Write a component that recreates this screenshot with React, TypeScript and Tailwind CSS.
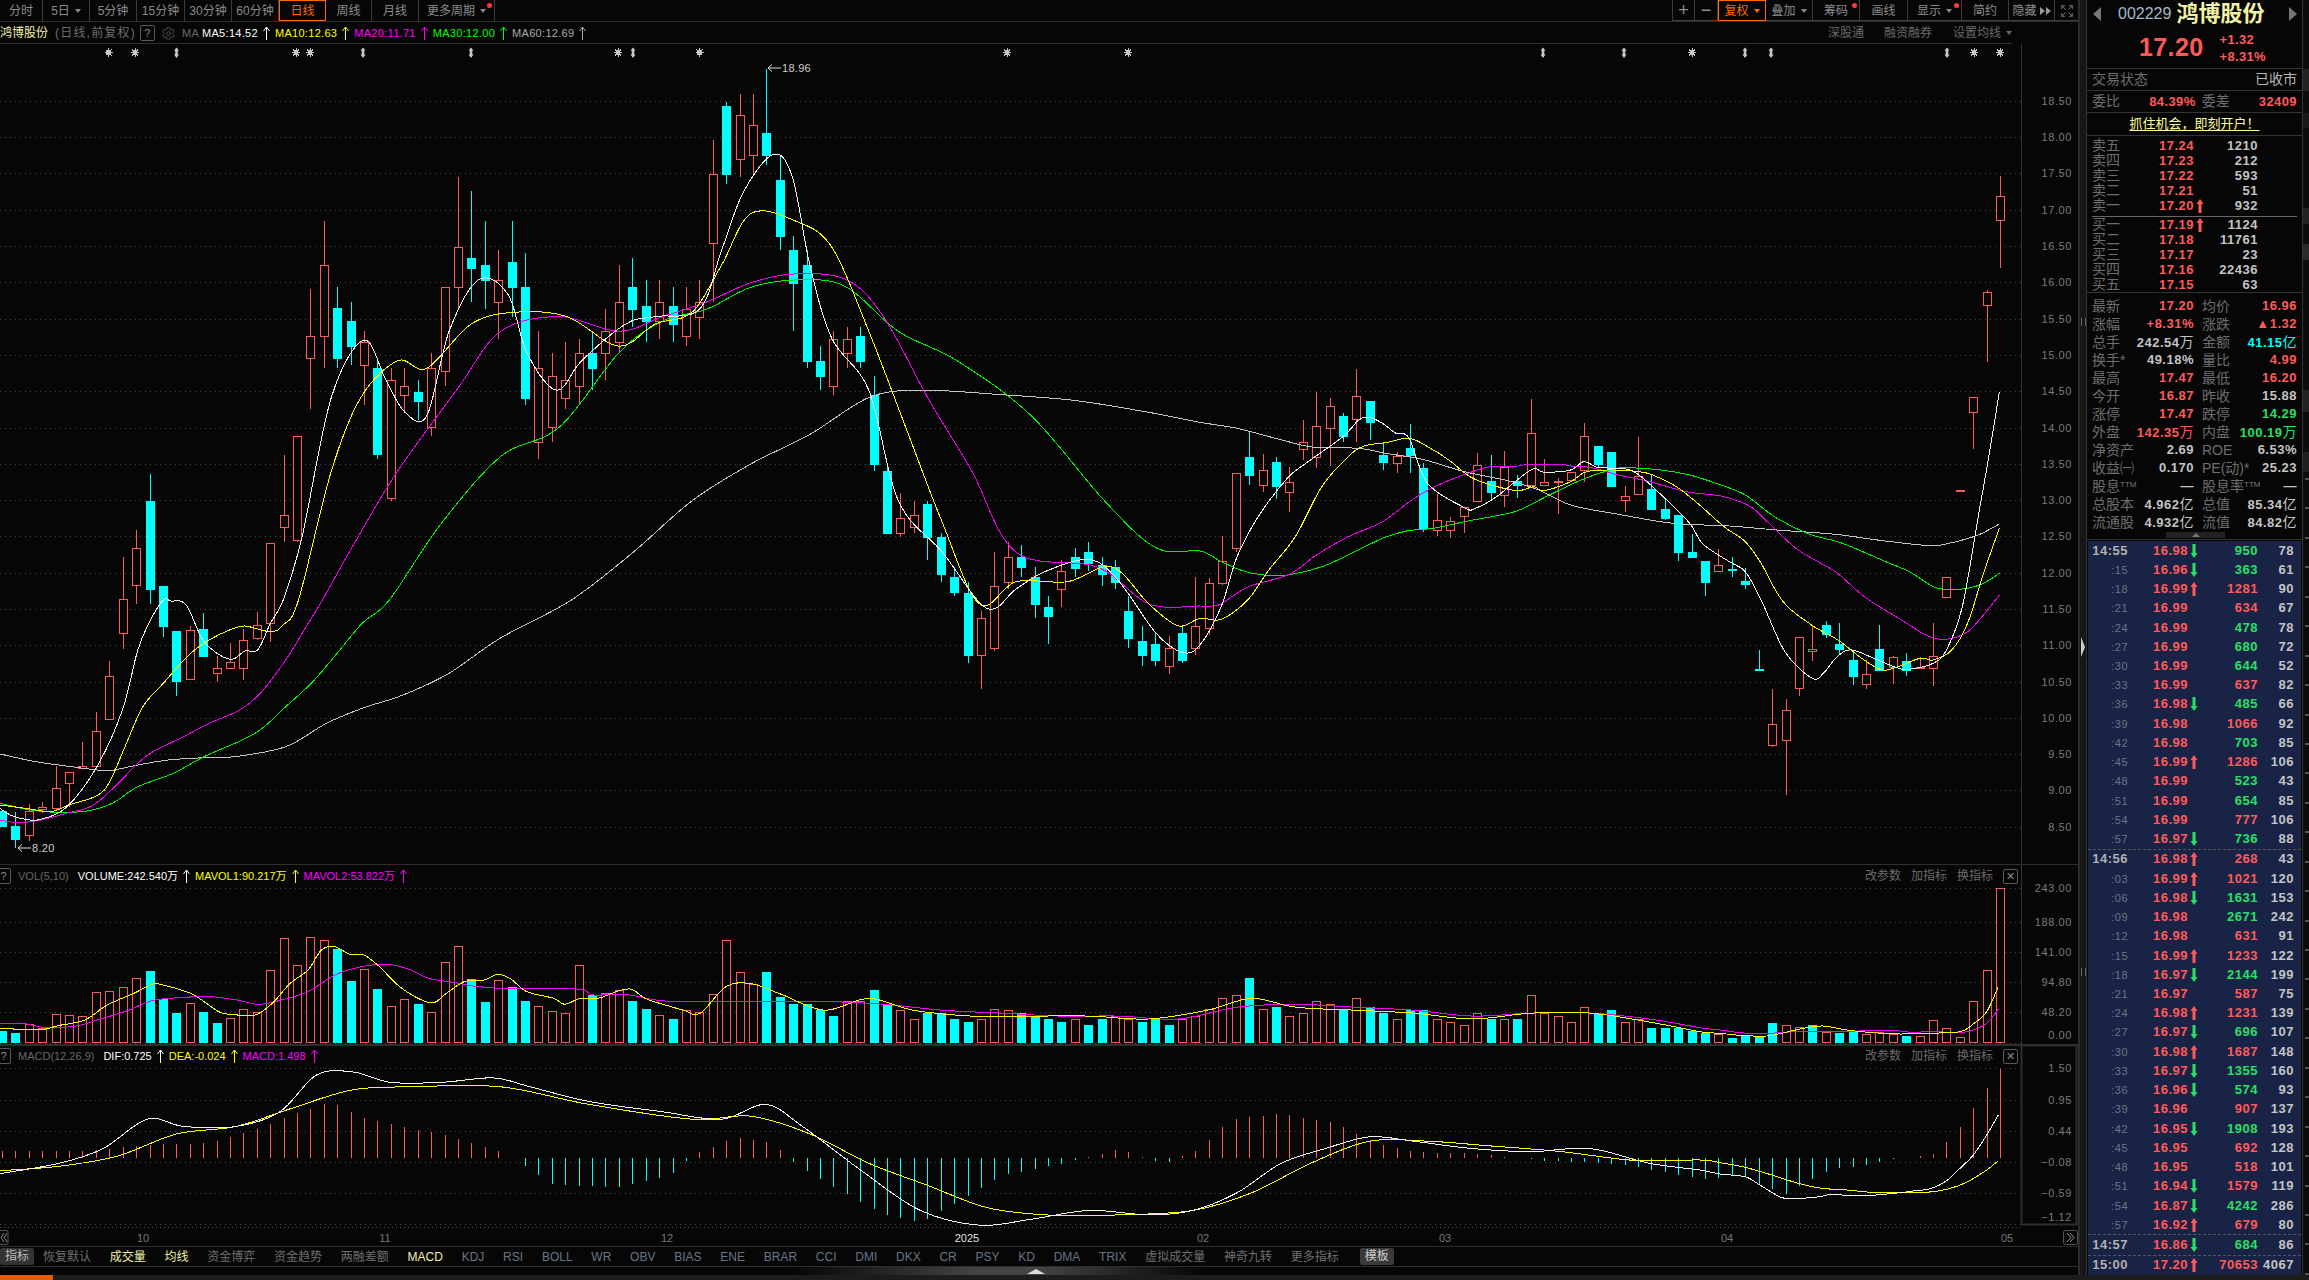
import React from 'react';
import { Settings, Expand } from 'lucide-react';

const S = 2309 / 1568;
const RED = '#ff5a5a';
const CYAN = '#00ffff';

type Pt = [number, number];
const pairs = (a: number[], fn: (x: number, y: number) => Pt): Pt[] => {
  const out: Pt[] = [];
  for (let i = 0; i < a.length; i += 2) out.push(fn(a[i], a[i + 1]));
  return out;
};
// point lists were read off at different crops of the picture
const ov = (a: number[]) => pairs(a, (x, y) => [x * S, y * S]);
const left = (a: number[]) => pairs(a, (x, y) => [x / 1.96, 600 + y / 3]);
const right = (a: number[]) => pairs(a, (x, y) => [1200 + x / 1.889, 340 + y / 3]);
const volL = (a: number[]) => pairs(a, (x, y) => [x / 2.24, 860 + y / 3]);
const subR = (a: number[]) => pairs(a, (x, y) => [1700 + x / 3, 860 + y / 3]);

const smooth = (p: Pt[]) => {
  let d = `M${p[0][0].toFixed(1)} ${p[0][1].toFixed(1)}`;
  for (let i = 0; i < p.length - 1; i++) {
    const a = p[Math.max(i - 1, 0)];
    const b = p[i];
    const c = p[i + 1];
    const e = p[Math.min(i + 2, p.length - 1)];
    const c1x = b[0] + (c[0] - a[0]) / 6;
    const c1y = b[1] + (c[1] - a[1]) / 6;
    const c2x = c[0] - (e[0] - b[0]) / 6;
    const c2y = c[1] - (e[1] - b[1]) / 6;
    d += `C${c1x.toFixed(1)} ${c1y.toFixed(1)} ${c2x.toFixed(1)} ${c2y.toFixed(1)} ${c[0].toFixed(1)} ${c[1].toFixed(1)}`;
  }
  return d;
};

const ma5 = [
  ...left([0, 625, 20, 645, 50, 658, 80, 658, 130, 622, 190, 500, 240, 330, 270, 150, 295, 60, 320, 0, 335, 3, 365, 15, 400, 125, 450, 178, 480, 153, 505, 150, 530, 70, 555, 0]),
  ...ov([205, 365, 225, 270, 247, 231, 262, 258, 275, 280, 290, 282, 305, 225, 325, 190, 345, 200, 358, 240, 378, 265, 395, 245, 425, 220, 445, 215, 475, 210, 490, 170, 505, 130, 525, 105, 538, 120, 550, 180, 565, 230, 590, 265, 610, 340, 640, 375, 670, 413, 690, 400, 710, 388, 740, 380, 760, 395, 785, 430, 803, 443]),
  ...right([0, 915, 40, 800, 70, 650, 110, 530, 165, 415, 200, 370, 270, 290, 300, 240, 320, 232, 345, 250, 370, 280, 395, 295, 430, 430, 500, 503, 520, 505, 560, 470, 625, 390, 650, 397, 700, 390, 725, 365, 750, 382, 780, 385, 820, 395, 875, 470, 925, 550, 950, 612, 1000, 665, 1030, 695, 1060, 780, 1105, 935, 1157, 1015, 1180, 995, 1205, 948, 1232, 930, 1280, 960, 1320, 985, 1340, 988, 1385, 970, 1410, 930, 1440, 800, 1470, 530, 1490, 350, 1510, 155]),
];
const ma10 = [
  ...left([0, 615, 50, 625, 100, 635, 135, 615, 190, 587, 215, 545, 245, 440, 280, 320, 320, 250, 370, 165, 410, 120, 450, 90, 480, 78, 530, 95, 555, 75, 585, 0]),
  ...ov([225, 320, 245, 270, 270, 245, 290, 250, 320, 220, 350, 212, 385, 215, 420, 235, 445, 220, 470, 212, 490, 180, 510, 145, 540, 150, 565, 168, 590, 225, 615, 290, 640, 355, 665, 410, 690, 395, 725, 395, 755, 385, 780, 410, 800, 425]),
  ...right([0, 835, 40, 838, 90, 780, 130, 690, 180, 590, 230, 440, 280, 350, 310, 318, 350, 308, 395, 295, 430, 320, 470, 360, 510, 410, 550, 435, 600, 452, 630, 440, 650, 452, 700, 425, 730, 395, 780, 390, 830, 395, 855, 405, 900, 440, 940, 490, 990, 560, 1030, 605, 1060, 670, 1085, 745, 1110, 800, 1160, 860, 1205, 900, 1250, 955, 1285, 988, 1310, 985, 1360, 955, 1385, 960, 1420, 930, 1450, 850, 1480, 700, 1510, 565]),
];
const ma20 = [
  ...left([0, 660, 35, 668, 80, 660, 130, 640, 180, 618, 225, 560, 270, 490, 300, 455, 360, 410, 410, 370, 470, 330, 510, 280, 560, 180, 600, 80, 632, 0]),
  ...ov([240, 370, 270, 320, 310, 265, 340, 225, 380, 215, 420, 225, 450, 215, 480, 205, 510, 192, 540, 186, 575, 190, 600, 215, 630, 270, 660, 320, 690, 375, 745, 385, 780, 410]),
  ...right([0, 798, 35, 795, 60, 770, 95, 738, 170, 702, 220, 645, 280, 590, 345, 545, 400, 480, 450, 435, 520, 392, 550, 380, 600, 378, 620, 373, 680, 373, 700, 378, 740, 383, 790, 405, 850, 425, 910, 452, 940, 460, 990, 470, 1040, 500, 1075, 550, 1130, 630, 1200, 695, 1255, 770, 1330, 845, 1375, 888, 1410, 898, 1450, 875, 1485, 815, 1510, 765]),
];
const ma30 = [
  ...left([0, 610, 60, 630, 110, 637, 170, 633, 220, 610, 270, 560, 340, 520, 400, 470, 500, 400, 560, 320, 610, 250, 650, 180, 710, 70, 763, 0]),
  ...ov([300, 355, 340, 310, 380, 290, 420, 240, 450, 218, 480, 210, 510, 195, 545, 190, 575, 195, 610, 225, 650, 245, 700, 282, 750, 340, 785, 372]),
  ...right([0, 633, 40, 665, 80, 692, 120, 705, 165, 705, 230, 680, 280, 645, 345, 595, 390, 573, 440, 565, 500, 545, 550, 530, 600, 512, 660, 465, 720, 420, 770, 392, 800, 383, 870, 390, 925, 405, 975, 430, 1030, 465, 1085, 530, 1150, 582, 1210, 608, 1300, 668, 1340, 695, 1385, 740, 1410, 748, 1450, 745, 1480, 730, 1510, 700]),
];
const ma60 = [
  ...left([0, 462, 70, 485, 130, 498, 180, 508, 215, 512, 270, 495, 330, 480, 400, 473, 460, 470, 560, 440, 640, 370, 710, 325, 790, 285, 880, 220, 980, 115, 1120, 0]),
  ...ov([430, 375, 470, 340, 510, 315, 550, 295, 590, 270, 625, 265, 680, 268, 730, 272, 780, 280]),
  ...right([0, 247, 70, 265, 150, 298, 215, 322, 300, 325, 350, 340, 420, 358, 500, 395, 590, 425, 640, 450, 700, 495, 780, 520, 870, 545, 920, 553, 1000, 558, 1090, 570, 1200, 583, 1290, 602, 1380, 617, 1420, 608, 1470, 585, 1510, 552]),
];

const volYellow = [
  ...volL([0, 505, 50, 508, 100, 508, 130, 497, 190, 480, 240, 435, 300, 400, 340, 373, 365, 375, 430, 402, 490, 455, 520, 463, 570, 466, 610, 430, 650, 370, 690, 330, 720, 270, 750, 260, 785, 284, 815, 285, 850, 320, 900, 385, 965, 428, 1000, 400, 1040, 365, 1085, 360, 1115, 343, 1145, 358, 1180, 395, 1240, 415, 1265, 433, 1300, 415, 1340, 415, 1385, 393, 1415, 388, 1445, 415, 1490, 435, 1530, 450, 1568, 460]),
  ...ov([493, 670, 510, 668, 530, 675, 560, 686, 590, 678, 620, 686, 660, 690, 700, 690, 740, 690, 780, 692, 820, 686, 850, 678, 880, 684, 920, 686, 960, 688, 1000, 692, 1040, 688, 1080, 688, 1120, 694]),
  ...subR([0, 515, 60, 520, 120, 526, 200, 528, 265, 515, 310, 505, 370, 498, 440, 510, 520, 518, 600, 522, 680, 520, 780, 515, 820, 492, 860, 455, 895, 380]),
];
const volMagenta = [
  ...volL([0, 490, 50, 490, 100, 502, 170, 498, 230, 475, 290, 450, 340, 422, 400, 413, 470, 410, 530, 420, 580, 433, 630, 420, 690, 395, 750, 345, 810, 320, 870, 313, 920, 330, 960, 355, 1020, 368, 1060, 378, 1120, 385, 1200, 385, 1300, 388, 1330, 405, 1400, 403, 1480, 422, 1568, 425]),
  ...ov([520, 680, 560, 680, 600, 682, 640, 686, 680, 688, 720, 690, 760, 690, 800, 692, 840, 684, 880, 682, 920, 684, 960, 686, 1000, 690, 1040, 688, 1080, 688, 1120, 692]),
  ...subR([0, 503, 60, 510, 120, 518, 200, 522, 235, 518, 320, 514, 400, 515, 520, 512, 600, 513, 640, 518, 680, 515, 785, 517, 820, 510, 860, 490, 895, 448]),
];
const dif = [
  ...ov([0, 797, 40, 790, 70, 780, 100, 760, 125, 765, 160, 765, 190, 755, 215, 730, 240, 728, 265, 735, 300, 735, 335, 732, 360, 738, 400, 748, 450, 755, 490, 760, 520, 750, 545, 765, 585, 795, 625, 822, 665, 832, 700, 828, 740, 822, 780, 825, 810, 822, 840, 810, 870, 790, 900, 780, 930, 772, 960, 775, 1000, 780, 1040, 782, 1080, 780, 1120, 790]),
  ...subR([0, 930, 60, 942, 135, 950, 175, 972, 215, 997, 255, 1015, 345, 1012, 395, 1003, 440, 1006, 515, 1006, 600, 998, 640, 993, 695, 985, 740, 962, 780, 925, 820, 885, 860, 825, 895, 765]),
];
const dea = [
  ...ov([0, 795, 40, 792, 80, 785, 120, 770, 160, 765, 200, 752, 240, 740, 280, 738, 340, 738, 400, 750, 470, 760, 510, 758, 550, 770, 590, 790, 630, 805, 670, 820, 710, 825, 760, 825, 810, 822, 850, 810, 890, 790, 930, 775, 970, 775, 1010, 778, 1060, 782, 1110, 788]),
  ...subR([0, 900, 60, 908, 135, 922, 215, 945, 295, 970, 365, 985, 440, 990, 515, 997, 600, 998, 680, 997, 740, 988, 800, 967, 860, 930, 895, 902]),
];

// candles: [cyan?, body top, body bottom, high, low] in page pixels
type Candle = [number, number, number, number, number];
const scaleC = (a: number[][]) => a.map((c) => [c[0], c[1] * S, c[2] * S, c[3] * S, c[4] * S] as Candle);
const candles: Candle[] = [
  [1, 811, 826, 811, 826], [1, 826, 839, 812, 848], [0, 811, 835, 804, 841], [0, 807, 809, 802, 813], [0, 788, 808, 766, 810],
  [0, 772, 783, 772, 807], [0, 766, 768, 742, 768], [0, 731, 766, 712, 770], [0, 676, 719, 661, 719],
  ...scaleC([[0, 407, 430, 378, 441], [0, 372, 397, 360, 410], [1, 340, 400, 322, 410]]),
  [1, 586, 626, 586, 637], [1, 631, 681, 631, 696], [0, 630, 679, 626, 679], [1, 629, 656, 613, 657], [0, 668, 673, 656, 682], [0, 662, 668, 643, 668], [0, 640, 668, 629, 680], [0, 625, 638, 612, 640],
  ...scaleC([
    [0, 369, 423, 369, 436], [0, 350, 358, 309, 368], [0, 296, 367, 296, 368], [0, 228, 243, 196, 278], [0, 180, 228, 150, 250],
    [1, 209, 243, 195, 250], [1, 218, 235, 205, 248], [0, 232, 248, 225, 275], [1, 250, 308, 245, 312], [0, 258, 338, 250, 340],
    [0, 262, 268, 250, 280], [1, 266, 272, 258, 285], [0, 250, 290, 240, 296], [0, 195, 252, 195, 262], [0, 168, 195, 120, 210],
    [1, 175, 182, 130, 205], [1, 180, 190, 150, 210], [0, 190, 205, 170, 230], [1, 178, 195, 150, 215], [1, 195, 270, 172, 275],
    [0, 250, 300, 225, 312], [0, 255, 290, 240, 300], [0, 258, 270, 232, 278], [0, 240, 262, 230, 275], [1, 240, 250, 225, 265],
    [0, 225, 240, 210, 258], [0, 205, 232, 180, 240], [1, 195, 210, 175, 222], [1, 208, 218, 190, 232], [0, 205, 218, 190, 230],
    [1, 208, 220, 195, 232], [0, 210, 228, 195, 235], [0, 205, 215, 190, 230], [0, 118, 165, 95, 205], [1, 72, 118, 69, 125],
    [0, 78, 108, 64, 120], [0, 85, 105, 64, 118], [1, 90, 105, 47, 112], [1, 122, 160, 105, 170], [1, 170, 192, 160, 225],
    [1, 180, 245, 170, 250], [1, 245, 255, 235, 265], [0, 230, 262, 225, 268], [0, 230, 240, 222, 250], [1, 228, 245, 222, 250],
    [1, 268, 315, 255, 320], [1, 320, 362, 315, 362], [0, 352, 362, 335, 365], [0, 350, 358, 340, 362], [1, 342, 365, 340, 380],
    [1, 365, 390, 362, 395], [1, 392, 402, 385, 405], [1, 403, 445, 395, 450], [0, 420, 445, 415, 468], [0, 398, 440, 375, 442],
    [0, 378, 395, 368, 400], [1, 378, 385, 370, 392], [1, 392, 410, 385, 420], [1, 412, 418, 405, 437], [0, 388, 400, 380, 412],
    [1, 378, 386, 372, 392], [1, 375, 382, 368, 388], [1, 384, 390, 378, 398], [1, 385, 395, 380, 400], [1, 415, 433, 405, 440],
    [1, 435, 445, 425, 452], [1, 437, 448, 430, 452], [0, 440, 452, 432, 458], [1, 430, 448, 425, 450], [0, 425, 440, 392, 445],
  ]),
  [0, 583, 628, 578, 635], [0, 561, 583, 536, 585], [0, 473, 548, 473, 552], [1, 457, 475, 432, 485], [0, 470, 485, 454, 492],
  [1, 462, 486, 457, 499], [0, 482, 492, 467, 512], [0, 442, 449, 420, 460], [0, 426, 457, 392, 468], [0, 406, 428, 398, 466],
  [1, 416, 436, 413, 442], [0, 396, 419, 369, 442], [1, 401, 422, 401, 440], [1, 455, 462, 442, 470], [0, 456, 463, 452, 473],
  [1, 448, 455, 424, 473], [1, 468, 528, 463, 532], [0, 520, 530, 494, 536], [0, 521, 530, 517, 538], [0, 507, 516, 507, 533],
  [0, 465, 501, 453, 501], [1, 481, 492, 455, 499], [0, 467, 495, 451, 507], [1, 481, 485, 475, 498], [0, 433, 485, 399, 485],
  [0, 482, 485, 459, 485], [0, 481, 482, 478, 514], [0, 472, 480, 472, 480], [0, 436, 470, 423, 482], [1, 446, 464, 446, 468],
  [1, 452, 486, 452, 486], [0, 496, 500, 486, 512], [0, 476, 494, 437, 495], [1, 489, 509, 475, 509], [1, 509, 518, 498, 520],
  [1, 515, 552, 515, 561], [1, 552, 557, 534, 557], [1, 561, 582, 561, 596], [0, 565, 571, 549, 571], [1, 569, 570, 557, 577],
  [1, 581, 584, 568, 589], [1, 669, 670, 650, 670], [0, 724, 745, 689, 747], [0, 710, 740, 699, 795], [0, 637, 688, 637, 696],
  [0, 649, 651, 625, 661], [1, 625, 634, 621, 638], [1, 644, 649, 623, 654], [1, 660, 676, 650, 685], [0, 674, 684, 660, 689],
  [1, 649, 670, 625, 671], [0, 657, 667, 656, 684], [1, 661, 670, 653, 676], [0, 667, 668, 657, 668], [0, 656, 668, 623, 686],
  [0, 577, 597, 577, 597], [0, 490, 491, 490, 491], [0, 397, 412, 397, 449], [0, 292, 305, 290, 362], [0, 196, 220, 176, 268],
];

// volume bars: [cyan?, top y]
const fromZ = (a: number[][]) => a.map((b) => [b[0], 860 + b[1] / 3]);
const fromOv = (a: number[][]) => a.map((b) => [b[0], b[1] * S]);
const volumes = [
  ...fromZ([[1, 513], [1, 519], [0, 493], [0, 505], [0, 463], [0, 466], [0, 469], [0, 397], [0, 394], [0, 382], [0, 355], [1, 333], [1, 418], [1, 459], [0, 430], [1, 456], [1, 489], [0, 475], [0, 448], [0, 457], [0, 331], [0, 235], [0, 316], [0, 232], [0, 241], [1, 267], [1, 363], [0, 328], [1, 387], [0, 439], [0, 418], [1, 432], [0, 457], [0, 307], [0, 259], [1, 357], [1, 426], [0, 361], [1, 382], [1, 423], [0, 439], [0, 454], [0, 460], [0, 316], [1, 405], [0, 400], [0, 391], [1, 423], [1, 447], [0, 466], [1, 477], [0, 451], [0, 457]]),
  ...fromOv([[0, 675], [0, 638], [0, 660], [0, 668], [1, 660], [1, 677], [1, 682], [1, 682], [1, 686], [1, 690], [0, 680], [0, 680], [1, 672], [1, 682], [0, 686], [0, 692], [1, 688], [1, 688], [1, 692], [1, 694], [0, 692], [0, 685], [0, 686], [1, 688], [1, 690], [1, 692], [1, 694], [0, 692], [1, 696], [1, 692], [0, 690], [0, 692], [1, 694], [1, 692], [1, 696], [0, 692], [0, 690], [0, 685], [0, 678], [0, 676], [1, 664], [0, 685], [1, 684], [0, 690], [0, 688], [0, 680], [0, 682], [1, 686], [0, 678], [1, 684], [1, 688], [0, 692], [1, 686], [1, 686], [0, 692], [0, 694], [0, 696], [0, 688], [1, 692], [0, 692], [1, 692], [0, 676], [0, 688], [0, 690], [0, 694], [0, 684], [1, 688], [1, 686], [0, 694], [0, 692], [1, 698], [1, 698], [1, 698], [1, 700]]),
  ...fromZ([[1, 518], [0, 522], [1, 534], [1, 527], [1, 530], [1, 489], [0, 495], [0, 502], [1, 495], [0, 516], [1, 519], [1, 516], [0, 522], [0, 516], [0, 522], [1, 528], [0, 529], [0, 481], [0, 505], [0, 532], [0, 424], [0, 331], [0, 85]]),
];

const histKeys: Pt[] = [[0, 5], [60, 5], [100, 9], [140, 10], [170, 18], [200, 30], [225, 38], [245, 28], [270, 22], [300, 16], [340, 4], [352, -2], [375, -18], [420, -20], [455, -12], [470, 2], [500, 14], [525, 10], [540, -4], [570, -22], [600, -38], [625, -44], [650, -30], [680, -12], [720, -4], [760, 6], [790, -4], [815, 6], [835, 26], [870, 30], [905, 24], [935, 10], [960, 4], [1000, 3], [1050, -2], [1100, -4], [1154, -14]];
const histTail = [-21, -20, -18, -18, -26, -31, -36, -28, -21, -14, -10, -9, -7, -4, -1, 0, 2, 4, 16, 31, 50, 70, 89];
const histAt = (i: number) => {
  if (i >= 127) return histTail[i - 127];
  const x = (2 + 13.41 * i) / S;
  for (let k = 0; k < histKeys.length - 1; k++) {
    const a = histKeys[k];
    const b = histKeys[k + 1];
    if (x >= a[0] && x <= b[0]) return (a[1] + ((b[1] - a[1]) * (x - a[0])) / (b[0] - a[0])) * S;
  }
  return 0;
};

const barX = (i: number) => Math.round(2 + 13.41 * i) + 0.5;

const Grid = ({ ys }: { ys: number[] }) => (
  <>
    {ys.map((y) => (
      <line key={y} x1={0} x2={2021} y1={y + 0.5} y2={y + 0.5} stroke="#4a4a4a" strokeDasharray="1 4" shapeRendering="crispEdges" />
    ))}
  </>
);

const AxisLabels = ({ items }: { items: [string, number][] }) => (
  <>
    {items.map(([t, y]) => (
      <text key={t} x={2072} y={y + 4} textAnchor="end" fontSize={11} letterSpacing={0.6} fill="#7a7a7a">
        {t}
      </text>
    ))}
  </>
);

const Line = ({ pts, color }: { pts: Pt[]; color: string }) => (
  <path d={smooth(pts)} fill="none" stroke={color} strokeWidth={1} shapeRendering="crispEdges" />
);

const ExtremeLabel = ({ x, y, text }: { x: number; y: number; text: string }) => (
  <g>
    <path d={`M${x + 14} ${y}H${x + 1}M${x + 5} ${y - 3.5}L${x + 1} ${y}L${x + 5} ${y + 3.5}`} fill="none" stroke="#dcdcdc" />
    <text x={x + 15} y={y + 4} fontSize={11} letterSpacing={0.3} fill="#cfcfcf">{text}</text>
  </g>
);

const stars = [108.7, 135, 618, 296, 310, 699.5, 1007, 1128, 1692, 1974, 2000];
const dbl = [176.5, 363, 471, 633, 1543, 1624, 1745, 1771, 1947];

const priceTicks: [string, number][] = [['18.50', 101], ['18.00', 137], ['17.50', 173], ['17.00', 210], ['16.50', 246], ['16.00', 282], ['15.50', 319], ['15.00', 355], ['14.50', 391], ['14.00', 428], ['13.50', 464], ['13.00', 500], ['12.50', 536], ['12.00', 573], ['11.50', 609], ['11.00', 645], ['10.50', 682], ['10.00', 718], ['9.50', 754], ['9.00', 790], ['8.50', 827]];

const MainChart = () => (
  <svg className="block w-[2078px] h-[820px]" viewBox="0 44 2078 820">
    <Grid ys={priceTicks.map((t) => t[1])} />
    <line x1={2021.5} x2={2021.5} y1={44} y2={864} stroke="#333" />
    <AxisLabels items={priceTicks} />
    {stars.map((x) => (
      <g key={x} stroke="#c8c8c8" strokeWidth={1} shapeRendering="crispEdges">
        <circle cx={x} cy={52.5} r={2} fill="#c8c8c8" />
        <line x1={x - 4} x2={x + 4} y1={52.5} y2={52.5} />
        <line x1={x} x2={x} y1={48} y2={57} />
        <line x1={x - 3} x2={x + 3} y1={49.5} y2={55.5} />
        <line x1={x + 3} x2={x - 3} y1={49.5} y2={55.5} />
      </g>
    ))}
    {dbl.map((x) => (
      <path key={x} d={`M${x} 47.5l2.5 3h-1.2v4h1.2l-2.5 3.5l-2.5-3.5h1.2v-4h-1.2z`} fill="#c8c8c8" />
    ))}
    {candles.map((c, i) => {
      const x = barX(i);
      const top = Math.round(c[1]) + 0.5;
      const bot = Math.round(c[2]) + 0.5;
      const color = c[0] ? CYAN : RED;
      return (
        <g key={i} shapeRendering="crispEdges">
          <line x1={x} x2={x} y1={Math.round(c[3])} y2={Math.round(c[4])} stroke={color} />
          <rect x={x - 4} y={top} width={8} height={Math.max(bot - top, 1)} fill={c[0] ? CYAN : '#060606'} stroke={color} />
        </g>
      );
    })}
    <Line pts={ma60} color="#c4c4c4" />
    <Line pts={ma30} color="#00f000" />
    <Line pts={ma20} color="#f000f0" />
    <Line pts={ma10} color="#ffff00" />
    <Line pts={ma5} color="#f4f4f4" />
    <ExtremeLabel x={767} y={68} text="18.96" />
    <ExtremeLabel x={17} y={848} text="8.20" />
  </svg>
);

const volTicks: [string, number][] = [['243.00', 888], ['188.00', 922], ['141.00', 952], ['94.80', 982], ['48.20', 1012], ['0.00', 1035]];
const VolChart = () => (
  <svg className="block w-[2078px] h-[180px]" viewBox="0 864 2078 180">
    <Grid ys={[888, 922, 952, 982, 1012, 1043]} />
    <line x1={2021.5} x2={2021.5} y1={864} y2={1044} stroke="#333" />
    <AxisLabels items={volTicks} />
    {volumes.map((v, i) => {
      const top = Math.round(v[1]) + 0.5;
      const x = barX(i);
      return (
        <rect key={i} x={x - 4} y={top} width={8} height={1042.5 - top} fill={v[0] ? CYAN : '#060606'} stroke={v[0] ? CYAN : RED} shapeRendering="crispEdges" />
      );
    })}
    <Line pts={volMagenta} color="#f000f0" />
    <Line pts={volYellow} color="#ffff00" />
  </svg>
);

const macdTicks: [string, number][] = [['1.50', 1068], ['0.95', 1100], ['0.44', 1131], ['−0.08', 1162], ['−0.59', 1193], ['−1.12', 1217]];
const MacdChart = () => (
  <svg className="block w-[2078px] h-[182px]" viewBox="0 1044 2078 182">
    <Grid ys={[1068, 1100, 1131, 1162, 1193, 1224]} />
    <rect x={2021.5} y={1045.5} width={55} height={179} fill="none" stroke="#2e2e2e" strokeWidth={2} />
    <AxisLabels items={macdTicks} />
    {Array.from({ length: 150 }, (_, i) => {
      const h = histAt(i);
      const x = barX(i);
      if (Math.abs(h) < 0.5) return null;
      return <line key={i} x1={x} x2={x} y1={1158} y2={1158 - h} stroke={h > 0 ? RED : CYAN} shapeRendering="crispEdges" />;
    })}
    <Line pts={dea} color="#ffff00" />
    <Line pts={dif} color="#f4f4f4" />
  </svg>
);

const dates: [string, number, string][] = [['10', 143, '#777'], ['11', 385, '#777'], ['12', 667, '#777'], ['2025', 967, '#e0e0e0'], ['02', 1203, '#777'], ['03', 1445, '#777'], ['04', 1727, '#777'], ['05', 2007, '#777']];
const DateAxis = () => (
  <svg className="block w-[2078px] h-[20px]" viewBox="0 1226 2078 20">
    <line x1={0} x2={2021} y1={1227.5} y2={1227.5} stroke="#4a4a4a" strokeDasharray="1 3" shapeRendering="crispEdges" />
    {dates.map(([t, x, c]) => (
      <text key={t} x={x} y={1242} textAnchor="middle" fontSize={11} fill={c}>{t}</text>
    ))}
    <rect x={-4} y={1230.5} width={12} height={14} rx={2} fill="none" stroke="#555" />
    <path d="M4 1233l-3 4.5l3 4.5M7 1233l-3 4.5l3 4.5" fill="none" stroke="#888" />
    <rect x={2063.5} y={1230.5} width={14} height={14} rx={2} fill="none" stroke="#555" />
    <path d="M2067 1233l4 4.5l-4 4.5M2070 1233l4 4.5l-4 4.5" fill="none" stroke="#999" />
  </svg>
);

const Caret = ({ color = 'border-t-[#888]' }: { color?: string }) => (
  <span className={`inline-block ml-[5px] w-0 h-0 border-x-[3px] border-x-transparent border-t-[4px] ${color}`} />
);
const Dot = () => <span className="absolute top-[3px] right-[2px] w-[5px] h-[5px] rounded-full bg-[#ff3838]" />;

const UpThin = ({ color }: { color: string }) => (
  <svg width={7} height={14} viewBox="0 0 7 14" className="mx-[5px] shrink-0">
    <path d="M3.5 14V1M0.5 5l3-4l3 4" fill="none" stroke={color} strokeWidth={1} />
  </svg>
);

const leftTools = [
  { t: '分时', w: 'w-[43px]' },
  { t: '5日', w: 'w-[47px]', caret: true },
  { t: '5分钟', w: 'w-[47px]' },
  { t: '15分钟', w: 'w-[48px]' },
  { t: '30分钟', w: 'w-[47px]' },
  { t: '60分钟', w: 'w-[47px]' },
  { t: '日线', w: 'w-[47px]', active: true },
  { t: '周线', w: 'w-[46px]' },
  { t: '月线', w: 'w-[47px]' },
  { t: '更多周期', w: 'w-[76px]', caret: true, dot: true },
];
const rightTools = [
  { t: '+', w: 'w-[22px]', big: true },
  { t: '−', w: 'w-[23px]', big: true },
  { t: '复权', w: 'w-[48px]', caret: true, active: true },
  { t: '叠加', w: 'w-[47px]', caret: true },
  { t: '筹码', w: 'w-[47px]', dot: true },
  { t: '画线', w: 'w-[48px]' },
  { t: '显示', w: 'w-[54px]', caret: true, dot: true },
  { t: '简约', w: 'w-[47px]' },
];

const ToolBtn = ({ b }: { b: any }) => (
  <div
    className={`relative ${b.w} h-[21px] flex items-center justify-center border-r ${b.active ? 'border border-[#ff6a00] text-[#ff6a00]' : 'border-[#3c3c3c] text-[#8c8c8c]'} ${b.big ? 'text-[18px] font-light' : 'text-[12px]'}`}
  >
    {b.t}
    {b.caret && <Caret color={b.active ? 'border-t-[#ff6a00]' : 'border-t-[#888]'} />}
    {b.dot && <Dot />}
  </div>
);

const Toolbar = () => (
  <div className="flex justify-between h-[22px] border-b border-[#2e2e2e]">
    <div className="flex">
      {leftTools.map((b) => (
        <ToolBtn key={b.t} b={b} />
      ))}
    </div>
    <div className="flex border-l border-[#3c3c3c] h-[21px] border-b">
      {rightTools.map((b) => (
        <ToolBtn key={b.t} b={b} />
      ))}
      <div className="w-[46px] h-[21px] flex items-center justify-center border-r border-[#3c3c3c] text-[12px] text-[#8c8c8c]">
        隐藏
        <span className="ml-[3px] flex">
          <span className="w-0 h-0 border-y-[4px] border-y-transparent border-l-[5px] border-l-[#999]" />
          <span className="ml-[1px] w-0 h-0 border-y-[4px] border-y-transparent border-l-[5px] border-l-[#999]" />
        </span>
      </div>
      <div className="w-[23px] h-[21px] flex items-center justify-center text-[#8c8c8c]">
        <Expand size={14} strokeWidth={1.4} />
      </div>
    </div>
  </div>
);

const InfoRow = () => (
  <div className="relative flex items-center h-[22px] text-[11px] tracking-[0.3px] whitespace-nowrap">
    <div className="absolute left-0 right-[66px] bottom-0 h-px bg-[#2e2e2e]" />
    <span className="text-[12px] tracking-normal text-[#f2f2a6]">鸿博股份</span>
    <span className="ml-[7px] w-[85px] text-[12px] tracking-[1.2px] text-[#6e6e6e]">(日线,前复权)</span>
    <span className="w-[15px] h-[16px] flex items-center justify-center border border-[#5a5a5a] rounded-[2px] text-[#888]">?</span>
    <Settings size={15} strokeWidth={1.5} className="ml-[6px] text-[#555]" />
    <span className="ml-[6px] w-[20px] text-[#666]">MA</span>
    <span className="text-white">MA5:14.52</span>
    <UpThin color="#ffffff" />
    <span className="text-[#ffff00]">MA10:12.63</span>
    <UpThin color="#ffff00" />
    <span className="text-[#ff00ff]">MA20:11.71</span>
    <UpThin color="#ff00ff" />
    <span className="text-[#00ff00]">MA30:12.00</span>
    <UpThin color="#00ff00" />
    <span className="text-[#aaaaaa]">MA60:12.69</span>
    <UpThin color="#aaaaaa" />
    <div className="ml-auto mr-[66px] flex text-[12px] tracking-normal text-[#6a6a6a]">
      <span className="mr-[20px]">深股通</span>
      <span className="mr-[21px]">融资融券</span>
      <span className="flex items-center">设置均线<Caret color="border-t-[#666]" /></span>
    </div>
  </div>
);

const PaneHeader = ({ name, items }: { name: string; items: [string, string, string][] }) => (
  <div className="absolute inset-x-0 top-0 h-[24px] flex items-center text-[11px] whitespace-nowrap">
    <span className="ml-[-4px] w-[15px] h-[16px] flex items-center justify-center border border-[#5a5a5a] rounded-[2px] text-[#888]">?</span>
    <span className="ml-[7px] mr-[9px] text-[#666]">{name}</span>
    {items.map(([t, c, a]) => (
      <React.Fragment key={t}>
        <span className={c}>{t}</span>
        <UpThin color={a} />
      </React.Fragment>
    ))}
    <div className="ml-auto mr-[60px] flex items-center text-[12px] text-[#6a6a6a]">
      <span className="mr-[10px]">改参数</span>
      <span className="mr-[10px]">加指标</span>
      <span className="mr-[10px]">换指标</span>
      <span className="w-[15px] h-[15px] flex items-center justify-center border border-[#5a5a5a] rounded-[2px] text-[11px] text-[#888]">✕</span>
    </div>
  </div>
);

const tabs: [string, string][] = [
  ['恢复默认', 'text-[#707070]'], ['成交量', 'text-[#f2f2a6]'], ['均线', 'text-[#f2f2a6]'], ['资金博弈', 'text-[#707070]'], ['资金趋势', 'text-[#707070]'], ['两融差额', 'text-[#707070]'],
  ['MACD', 'text-[#f2f2a6]'], ['KDJ', 'text-[#667688]'], ['RSI', 'text-[#667688]'], ['BOLL', 'text-[#667688]'], ['WR', 'text-[#667688]'], ['OBV', 'text-[#667688]'], ['BIAS', 'text-[#667688]'], ['ENE', 'text-[#667688]'], ['BRAR', 'text-[#667688]'], ['CCI', 'text-[#667688]'], ['DMI', 'text-[#667688]'], ['DKX', 'text-[#667688]'], ['CR', 'text-[#667688]'], ['PSY', 'text-[#667688]'], ['KD', 'text-[#667688]'], ['DMA', 'text-[#667688]'], ['TRIX', 'text-[#667688]'],
  ['虚拟成交量', 'text-[#707070]'], ['神奇九转', 'text-[#707070]'], ['更多指标', 'text-[#707070]'],
];

const Tabs = () => (
  <div className="flex items-center h-[21px] border-y border-[#2e2e2e] text-[12px] whitespace-nowrap">
    <span className="w-[34px] h-[17px] leading-[17px] text-center bg-[#333] rounded-[2px] text-[#bbb]">指标</span>
    <div className="ml-[9px] flex gap-[18.75px]">
      {tabs.map(([t, c]) => (
        <span key={t} className={c}>{t}</span>
      ))}
    </div>
    <span className="ml-[21px] w-[34px] h-[17px] leading-[17px] text-center bg-[#3a3a3a] rounded-[2px] text-[#ccc]">模板</span>
  </div>
);

const BottomStrip = () => (
  <div className="relative h-[8px] bg-[linear-gradient(to_right,#050505_0%,#050505_38%,#444_47%,#444_50%,#050505_58%,#050505_100%)]">
    <span className="absolute left-[1027px] top-[2px] w-0 h-0 border-x-[9px] border-x-transparent border-b-[5px] border-b-[#ddd]" />
  </div>
);

const Arrow = ({ up }: { up: boolean }) => (
  <svg width={8} height={14} viewBox="0 0 8 14" className="shrink-0 block">
    {up ? <path d="M4 0L7.5 5H5.5V14H2.5V5H0.5Z" fill="#ff5a5a" /> : <path d="M4 14L0.5 9H2.5V0H5.5V9H7.5Z" fill="#27e066" />}
  </svg>
);

const colorOf: Record<string, string> = { r: 'text-[#ff5a5a]', w: 'text-[#c4c4c4]', g: 'text-[#27e066]', c: 'text-[#00ffff]' };

const sells: [string, string, boolean, string][] = [['卖五', '17.24', false, '1210'], ['卖四', '17.23', false, '212'], ['卖三', '17.22', false, '593'], ['卖二', '17.21', false, '51'], ['卖一', '17.20', true, '932']];
const buys: [string, string, boolean, string][] = [['买一', '17.19', true, '1124'], ['买二', '17.18', false, '11761'], ['买三', '17.17', false, '23'], ['买四', '17.16', false, '22436'], ['买五', '17.15', false, '63']];

const BookRow = ({ r }: { r: [string, string, boolean, string] }) => (
  <div className="flex items-center h-[15px] pl-[5px]">
    <span className="w-[67px] text-[14px] leading-[15px] text-[#6e6e6e]">{r[0]}</span>
    <span className="w-[36px] text-[13px] font-bold tracking-[0.5px] text-[#ff5a5a]">{r[1]}</span>
    <span className="w-[10px] pl-[1px]">{r[2] && <Arrow up />}</span>
    <span className="w-[53px] text-right text-[13px] font-bold tracking-[0.5px] text-[#c4c4c4]">{r[3]}</span>
  </div>
);

const stats: string[][] = [
  ['最新', '17.20', 'r', '均价', '16.96', 'r'],
  ['涨幅', '+8.31%', 'r', '涨跌', '▲1.32', 'r'],
  ['总手', '242.54万', 'w', '金额', '41.15亿', 'c'],
  ['换手*', '49.18%', 'w', '量比', '4.99', 'r'],
  ['最高', '17.47', 'r', '最低', '16.20', 'r'],
  ['今开', '16.87', 'r', '昨收', '15.88', 'w'],
  ['涨停', '17.47', 'r', '跌停', '14.29', 'g'],
  ['外盘', '142.35万', 'r', '内盘', '100.19万', 'g'],
  ['净资产', '2.69', 'w', 'ROE', '6.53%', 'w'],
  ['收益㈠', '0.170', 'w', 'PE(动)*', '25.23', 'w'],
  ['股息', '—', 'w', '股息率', '—', 'w'],
  ['总股本', '4.962亿', 'w', '总值', '85.34亿', 'w'],
  ['流通股', '4.932亿', 'w', '流值', '84.82亿', 'w'],
];

const StatValue = ({ v, c }: { v: string; c: string }) => {
  const m = v.match(/^(.*?)([万亿])$/);
  return (
    <span className={`text-[13px] font-bold tracking-[0.5px] ${colorOf[c]}`}>
      {m ? m[1] : v}
      {m && <span className="font-normal text-[14px]">{m[2]}</span>}
    </span>
  );
};

const StatLabel = ({ t }: { t: string }) => (
  <span className="text-[14px] text-[#6e6e6e] whitespace-nowrap">
    {t}
    {t.startsWith('股息') && <sup className="text-[8px] text-[#7a7a7a]">TTM</sup>}
  </span>
);

const trades: [string, string, string, string, string, number][] = [
  ['14:55', '16.98', 'd', '950', 'g', 78], [':15', '16.96', 'd', '363', 'g', 61], [':18', '16.99', 'u', '1281', 'r', 90], [':21', '16.99', '', '634', 'r', 67],
  [':24', '16.99', '', '478', 'g', 78], [':27', '16.99', '', '680', 'g', 72], [':30', '16.99', '', '644', 'g', 52], [':33', '16.99', '', '637', 'r', 82],
  [':36', '16.98', 'd', '485', 'g', 66], [':39', '16.98', '', '1066', 'r', 92], [':42', '16.98', '', '703', 'g', 85], [':45', '16.99', 'u', '1286', 'r', 106],
  [':48', '16.99', '', '523', 'g', 43], [':51', '16.99', '', '654', 'g', 85], [':54', '16.99', '', '777', 'r', 106], [':57', '16.97', 'd', '736', 'g', 88],
  ['14:56', '16.98', 'u', '268', 'r', 43], [':03', '16.99', 'u', '1021', 'r', 120], [':06', '16.98', 'd', '1631', 'g', 153], [':09', '16.98', '', '2671', 'g', 242],
  [':12', '16.98', '', '631', 'r', 91], [':15', '16.99', 'u', '1233', 'r', 122], [':18', '16.97', 'd', '2144', 'g', 199], [':21', '16.97', '', '587', 'r', 75],
  [':24', '16.98', 'u', '1231', 'r', 139], [':27', '16.97', 'd', '696', 'g', 107], [':30', '16.98', 'u', '1687', 'r', 148], [':33', '16.97', 'd', '1355', 'g', 160],
  [':36', '16.96', 'd', '574', 'g', 93], [':39', '16.96', '', '907', 'r', 137], [':42', '16.95', 'd', '1908', 'g', 193], [':45', '16.95', '', '692', 'r', 128],
  [':48', '16.95', '', '518', 'r', 101], [':51', '16.94', 'd', '1579', 'r', 119], [':54', '16.87', 'd', '4242', 'g', 286], [':57', '16.92', 'u', '679', 'r', 80],
  ['14:57', '16.86', 'd', '684', 'g', 86], ['15:00', '17.20', 'u', '70653', 'r', 4067],
];

const TradeList = () => (
  <div className="flex-1 min-h-0 mx-px flex flex-col overflow-hidden bg-[#182346]">
    {trades.map((r, i) => {
      const full = r[0].length > 3;
      return (
        <div key={i} className={`flex-1 basis-0 min-h-0 flex items-center font-bold text-[13px] leading-[14px] tracking-[0.5px] ${full && i > 0 ? 'border-t border-dashed border-[#555]' : ''}`}>
          <span className={`w-[40px] text-right ${full ? 'text-[#b0b0b0]' : 'text-[#6f7484] font-normal text-[11px]'}`}>{r[0]}</span>
          <span className="ml-[25px] w-[37px] text-[#ff5a5a]">{r[1]}</span>
          <span className="w-[8px]">{r[2] && <Arrow up={r[2] === 'u'} />}</span>
          <span className={`w-[60px] text-right ${colorOf[r[4]]}`}>{r[3]}</span>
          <span className="w-[36px] text-right text-[#c4c4c4]">{r[5]}</span>
        </div>
      );
    })}
  </div>
);

const QuotePanel = () => (
  <div className="w-[217px] flex flex-col border-x border-[#333]">
    <div className="h-[69px] border-b border-[#333] shrink-0">
      <div className="flex items-center h-[28px] pl-[6px]">
        <span className="w-0 h-0 border-y-[7px] border-y-transparent border-r-[8px] border-r-[#777]" />
        <span className="ml-[17px] text-[16px] text-[#a3b8cc]">002229</span>
        <span className="ml-[5px] text-[22px] leading-[26px] font-bold text-[#f2f2a6]">鸿博股份</span>
        <span className="ml-[25px] w-0 h-0 border-y-[7px] border-y-transparent border-l-[8px] border-l-[#777]" />
      </div>
      <div className="flex items-center h-[40px] pl-[52px]">
        <span className="text-[25px] font-bold text-[#ff5a5a] tracking-[0.4px]">17.20</span>
        <div className="ml-[16px] flex flex-col text-[13px] font-bold tracking-[0.3px] leading-[17px] text-[#ff5a5a]">
          <span>+1.32</span>
          <span>+8.31%</span>
        </div>
      </div>
    </div>
    <div className="h-[22px] flex items-center justify-between px-[5px] border-b border-[#333] text-[14px] shrink-0">
      <span className="text-[#6e6e6e]">交易状态</span>
      <span className="text-[#b8b8b8]">已收市</span>
    </div>
    <div className="h-[22px] flex items-center justify-between px-[5px] border-b border-[#333] shrink-0">
      <span className="text-[14px] text-[#6e6e6e]">委比</span>
      <span className="ml-auto text-[13px] font-bold tracking-[0.4px] text-[#ff5a5a]">84.39%</span>
      <span className="ml-[6px] text-[14px] text-[#6e6e6e]">委差</span>
      <span className="ml-auto text-[13px] font-bold tracking-[0.4px] text-[#ff5a5a]">32409</span>
    </div>
    <div className="h-[23px] flex items-center justify-center border-b border-[#333] text-[13px] text-[#ffff99] underline underline-offset-2 shrink-0">
      抓住机会，即刻开户！
    </div>
    <div className="h-[80px] pt-[2px] border-b border-transparent shrink-0">
      {sells.map((r) => (
        <BookRow key={r[0]} r={r} />
      ))}
    </div>
    <div className="mx-[5px] h-px bg-[#666] shrink-0" />
    <div className="h-[76px] border-b border-[#333] shrink-0">
      {buys.map((r) => (
        <BookRow key={r[0]} r={r} />
      ))}
    </div>
    <div className="h-[247px] pt-[4px] border-b border-[#333] relative shrink-0">
      {stats.map((s) => (
        <div key={s[0]} className="flex items-center h-[18px] pl-[5px] pr-[5px]">
          <div className="w-[102px] flex items-center justify-between">
            <StatLabel t={s[0]} />
            <StatValue v={s[1]} c={s[2]} />
          </div>
          <div className="ml-[8px] flex-1 flex items-center justify-between">
            <StatLabel t={s[3]} />
            <StatValue v={s[4]} c={s[5]} />
          </div>
        </div>
      ))}
      <div className="absolute left-[79px] bottom-[1px] w-[59px] h-[6px] bg-[#222] flex justify-center">
        <span className="mt-[1px] w-0 h-0 border-x-[4px] border-x-transparent border-b-[4px] border-b-[#777]" />
      </div>
    </div>
    <div className="h-px shrink-0" />
    <TradeList />
  </div>
);

const Splitter = () => (
  <div className="relative w-[7px] bg-[#161616] border-l border-[#2a2a2a]">
    <div className="absolute left-[1px] top-[318px] w-[5px] h-[8px] border-x border-[#666]" />
    <span className="absolute left-[1px] top-[637px] w-0 h-0 border-y-[10px] border-y-transparent border-l-[4px] border-l-[#ccc]" />
    <div className="absolute left-[1px] top-[968px] w-[5px] h-[8px] border-x border-[#666]" />
  </div>
);

const EdgeStrip = () => (
  <div className="w-[6px] flex flex-col bg-[#0c0c0c]">
    <div className="mt-[69px] h-[22px] bg-[#222]" />
    <div className="mt-[22px] h-[15px] bg-[#181818]" />
    <div className="mt-[80px] h-[16px] bg-[#222]" />
    <div className="mt-[20px] h-[16px] bg-[#2a2a2a]" />
    <div className="mt-[130px] h-[22px] bg-[#222]" />
    <div className="mt-[40px] h-[20px] bg-[#1f1f1f]" />
    <div className="mt-[6px] flex-1 flex flex-col justify-between">
      {Array.from({ length: 28 }, (_, i) => (
        <span key={i} className="ml-[2px] w-[4px] h-[2px] bg-[#555]" />
      ))}
    </div>
  </div>
);

const bottomTabs = ['w-[53px] bg-[#e85c00]', 'w-[61px] bg-[#1c1c1c]', 'w-[59px] bg-[#1c1c1c]', 'w-[60px] bg-[#1c1c1c]', 'w-[73px] bg-[#1c1c1c]', 'w-[72px] bg-[#1c1c1c]', 'w-[60px] bg-[#1c1c1c]', 'w-[72px] bg-[#1c1c1c]', 'w-[71px] bg-[#1c1c1c]', 'w-[72px] bg-[#1c1c1c]'];

export default function App() {
  return (
    <div className="w-[2309px] h-[1280px] overflow-hidden flex flex-col bg-[#060606] font-['Liberation_Sans','Noto_Sans_CJK_SC',sans-serif]">
      <div className="flex h-[1275px]">
        <div className="w-[2079px] flex flex-col border-r border-[#2e2e2e]">
          <Toolbar />
          <InfoRow />
          <div className="relative h-[820px]">
            <MainChart />
          </div>
          <div className="relative h-[180px]">
            <div className="absolute inset-x-0 top-0 h-px bg-[#2e2e2e]" />
            <VolChart />
            <PaneHeader
              name="VOL(5,10)"
              items={[
                ['VOLUME:242.540万', 'text-white', '#ffffff'],
                ['MAVOL1:90.217万', 'text-[#ffff00]', '#ffff00'],
                ['MAVOL2:53.822万', 'text-[#ff00ff]', '#ff00ff'],
              ]}
            />
          </div>
          <div className="relative h-[182px]">
            <div className="absolute inset-x-0 top-0 h-[2px] bg-[#2e2e2e]" />
            <MacdChart />
            <PaneHeader
              name="MACD(12,26,9)"
              items={[
                ['DIF:0.725', 'text-white', '#ffffff'],
                ['DEA:-0.024', 'text-[#ffff00]', '#ffff00'],
                ['MACD:1.498', 'text-[#ff00ff]', '#ff00ff'],
              ]}
            />
          </div>
          <DateAxis />
          <Tabs />
          <BottomStrip />
        </div>
        <Splitter />
        <QuotePanel />
        <EdgeStrip />
      </div>
      <div className="flex h-[5px] bg-[#1c1c1c] gap-px">
        {bottomTabs.map((c, i) => (
          <div key={i} className={c} />
        ))}
      </div>
    </div>
  );
}
